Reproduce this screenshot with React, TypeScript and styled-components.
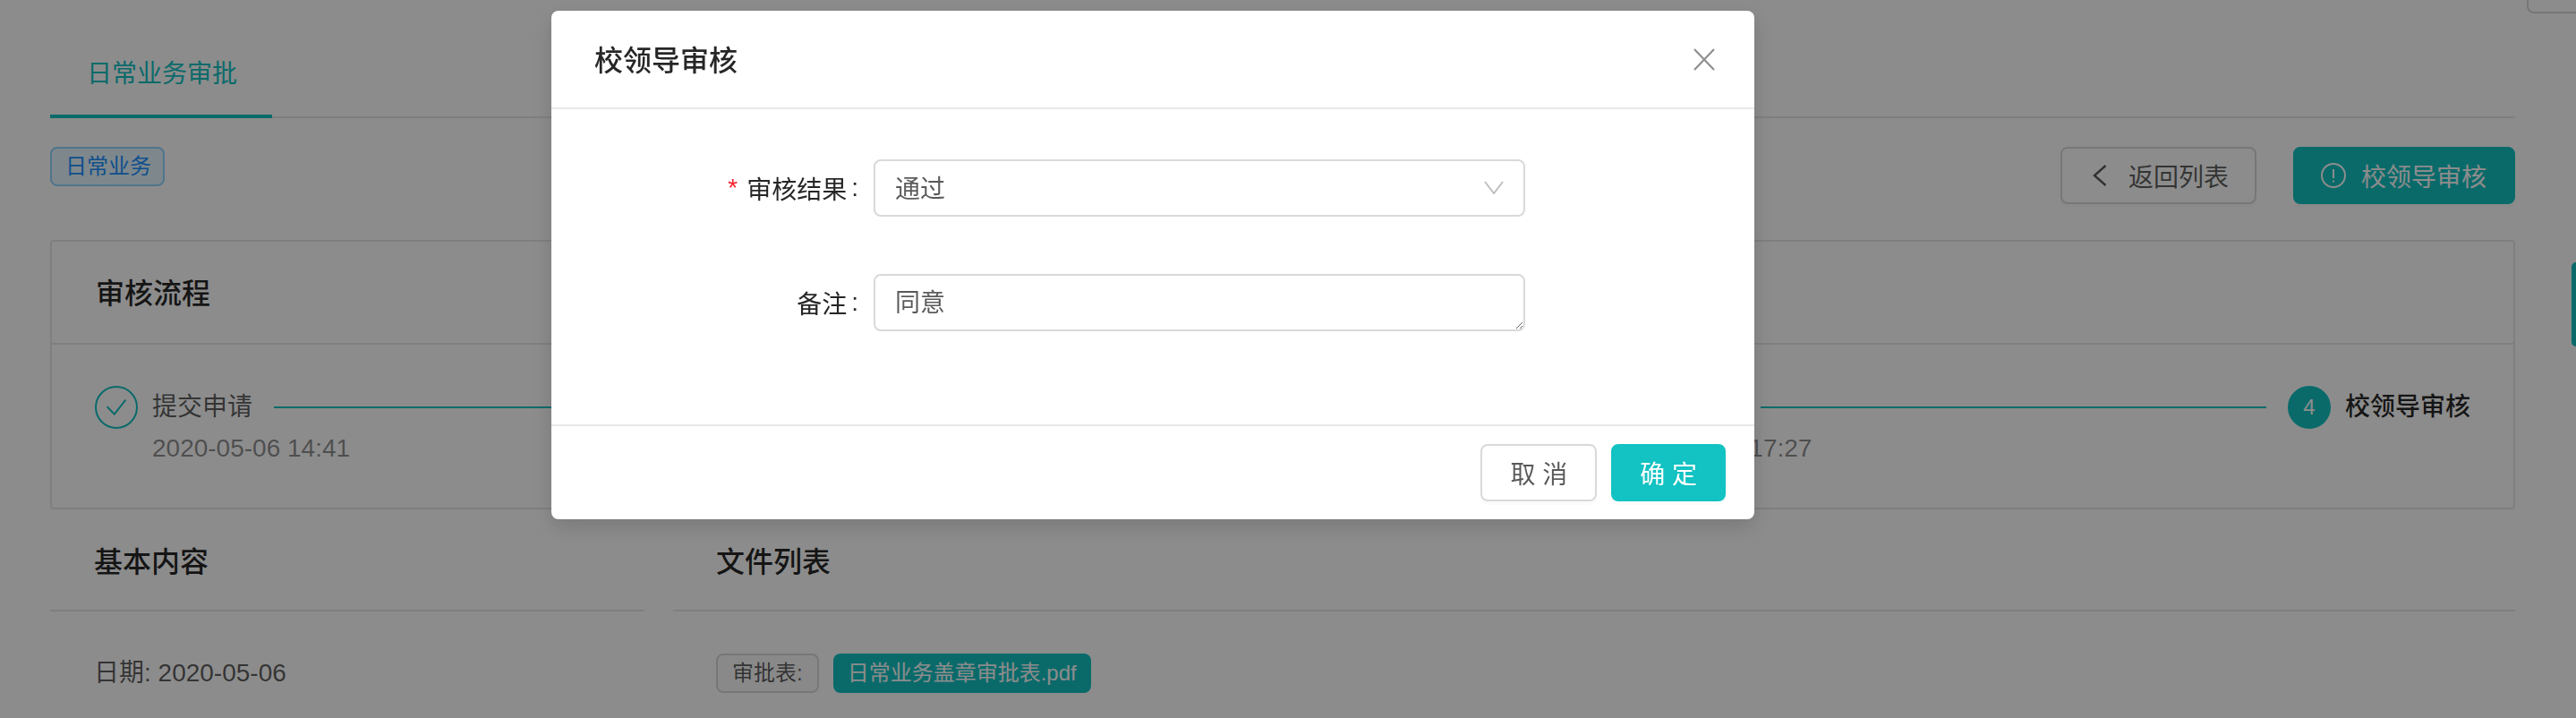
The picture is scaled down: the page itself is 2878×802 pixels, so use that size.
import React from "react";
import styled, { createGlobalStyle } from "styled-components";

const Global = createGlobalStyle`
  html, body { margin: 0; padding: 0; height: 802px; overflow: hidden; background: #fff; }
  body { font-family: "Liberation Sans", "Noto Sans CJK SC", sans-serif; font-size: 28px; color: rgba(0,0,0,.65); }
  * { box-sizing: border-box; }
`;

const TEAL = "#13c2c2";

const Page = styled.div`
  width: 2878px; height: 802px; padding: 0 68px 0 56px; overflow: hidden; position: relative;
`;
const Tabs = styled.div`
  height: 132px; display: flex; align-items: flex-end; border-bottom: 2px solid #e8e8e8;
`;
const ActiveTab = styled.div`
  width: 248px; height: 132px; margin-bottom: -2px; border-bottom: 4px solid ${TEAL};
  color: ${TEAL}; font-size: 28px; line-height: 40px; padding: 63px 0 0 41px; white-space: nowrap;
`;
const Toolbar = styled.div`
  margin-top: 32px; height: 64px; display: flex; justify-content: space-between; align-items: flex-start;
`;
const BlueTag = styled.span`
  height: 44px; padding: 0 13px 0 15px; display: inline-flex; align-items: center; border: 2px solid #91d5ff;
  border-radius: 8px; background: #e6f7ff; color: #1890ff; font-size: 24px; line-height: 40px;
`;
const Actions = styled.div`
  display: flex; gap: 41px;
`;
const PageButton = styled.div<{ $primary?: boolean }>`
  height: 64px; display: flex; align-items: center; border-radius: 8px; font-size: 28px; white-space: nowrap;
  border: 2px solid ${(p) => (p.$primary ? TEAL : "#d9d9d9")};
  background: ${(p) => (p.$primary ? TEAL : "#fff")};
  color: ${(p) => (p.$primary ? "#fff" : "rgba(0,0,0,.65)")};
  padding: ${(p) => (p.$primary ? "0 30px 0 29px" : "0 29px 0 34px")};
  gap: ${(p) => (p.$primary ? "17px" : "24px")};
  box-shadow: 0 4px 0 rgba(0,0,0,.015);
`;
const Card = styled.section`
  margin-top: 40px; height: 301px; border: 2px solid #e8e8e8; border-radius: 4px;
`;
const CardTitle = styled.div`
  height: 109px; padding: 0 0 4px 49px; border-bottom: 2px solid #e8e8e8; display: flex; align-items: center;
  font-size: 32px; font-weight: 500; color: rgba(0,0,0,.85); box-sizing: content-box;
`;
const Steps = styled.div`
  display: flex; padding: 46px 48px 0 48px;
`;
const Step = styled.div<{ $last?: boolean }>`
  display: flex; gap: 16px; flex: ${(p) => (p.$last ? "0 0 auto" : "1 1 0")}; min-width: 0;
  padding-right: ${(p) => (p.$last ? "0" : "24px")};
`;
const StepCircle = styled.div<{ $filled?: boolean }>`
  flex: 0 0 48px; width: 48px; height: 48px; border-radius: 50%; border: 2px solid ${TEAL};
  background: ${(p) => (p.$filled ? TEAL : "#fff")}; color: #fff; display: flex; align-items: center; justify-content: center;
  font-size: 24px;
`;
const StepBody = styled.div`
  flex: 1; min-width: 0;
`;
const StepHead = styled.div`
  display: flex; align-items: center; height: 48px; gap: 24px;
`;
const StepTitle = styled.div<{ $active?: boolean }>`
  font-size: 28px; line-height: 48px; white-space: nowrap; font-weight: ${(p) => (p.$active ? 500 : 400)};
  color: ${(p) => (p.$active ? "rgba(0,0,0,.85)" : "rgba(0,0,0,.65)")};
`;
const StepLine = styled.div`
  flex: 1; height: 2px; background: ${TEAL};
`;
const StepDate = styled.div`
  font-size: 28px; line-height: 44px; color: rgba(0,0,0,.45); white-space: nowrap;
`;
const Columns = styled.div`
  display: grid; grid-template-columns: 664px 1fr; column-gap: 32px;
`;
const SectionTitle = styled.div<{ $inset: number }>`
  height: 114px; padding-left: ${(p) => p.$inset}px; border-bottom: 2px solid #e8e8e8; display: flex; align-items: center;
  font-size: 32px; font-weight: 500; color: rgba(0,0,0,.85);
`;
const SectionBody = styled.div<{ $inset: number }>`
  padding: 46px 0 0 ${(p) => p.$inset}px; display: flex; align-items: center; gap: 16px; height: 92px;
  font-size: 28px; line-height: 44px;
`;
const GreyTag = styled.span`
  height: 44px; padding: 0 16px; display: inline-flex; align-items: center; border: 2px solid #d9d9d9; border-radius: 8px;
  background: #fafafa; font-size: 24px; color: rgba(0,0,0,.65);
`;
const TealTag = styled.span`
  height: 44px; padding: 0 16px; display: inline-flex; align-items: center; border-radius: 8px;
  background: ${TEAL}; font-size: 24px; color: #fff; white-space: nowrap;
`;
const TopCorner = styled.div`
  position: absolute; left: 2823px; top: -40px; width: 100px; height: 55px; border: 2px solid #d9d9d9; border-radius: 8px;
`;
const SideHandle = styled.div`
  position: absolute; right: 0; top: 293px; width: 5px; height: 94px; background: ${TEAL}; border-radius: 8px 0 0 8px;
`;
const Mask = styled.div`
  position: fixed; inset: 0; background: rgba(0,0,0,.45); padding: 12px 0 0 616px;
`;
const Dialog = styled.div`
  width: 1344px; height: 568px; background: #fff; border-radius: 8px; box-shadow: 0 8px 24px rgba(0,0,0,.15);
  display: flex; flex-direction: column;
`;
const DialogHeader = styled.div`
  height: 110px; flex: none; border-bottom: 2px solid #e8e8e8; padding: 0 44px 0 48px;
  display: flex; align-items: center; justify-content: space-between;
`;
const DialogTitle = styled.div`
  font-size: 32px; font-weight: 500; color: rgba(0,0,0,.85); padding-bottom: 3px;
`;
const DialogBody = styled.div`
  flex: 1; padding-top: 56px; display: flex; flex-direction: column; gap: 64px;
`;
const FormRow = styled.div`
  display: flex; height: 64px;
`;
const Label = styled.label`
  width: 360px; flex: none; display: flex; justify-content: flex-end; align-items: center; font-size: 28px;
  color: rgba(0,0,0,.85); padding: 0 16px 1px 0; white-space: nowrap;
`;
const Required = styled.span`
  color: #f5222d; font-size: 28px; margin-right: 10px; line-height: 1;
`;
const Colon = styled.span`
  margin-left: 5px; margin-right: 1px;
`;
const SelectBox = styled.div`
  width: 728px; height: 64px; border: 2px solid #d9d9d9; border-radius: 8px; padding: 0 22px 2px;
  display: flex; align-items: center; justify-content: space-between; font-size: 28px; color: rgba(0,0,0,.65);
`;
const TextArea = styled.textarea`
  width: 728px; height: 64px; border: 2px solid #d9d9d9; border-radius: 8px; padding: 9px 22px 7px; outline: none;
  font-family: inherit; font-size: 28px; line-height: 44px; color: rgba(0,0,0,.65); background: #fff; display: block;
`;
const DialogFooter = styled.div`
  height: 106px; flex: none; border-top: 2px solid #e8e8e8; padding: 20px 32px; display: flex; justify-content: flex-end; gap: 16px;
`;
const DialogButton = styled.div<{ $primary?: boolean }>`
  height: 64px; border-radius: 8px; display: flex; align-items: center; font-size: 28px; white-space: pre;
  padding: ${(p) => (p.$primary ? "0 30px" : "0 31px")};
  border: 2px solid ${(p) => (p.$primary ? TEAL : "#d9d9d9")};
  background: ${(p) => (p.$primary ? TEAL : "#fff")};
  color: ${(p) => (p.$primary ? "#fff" : "rgba(0,0,0,.65)")};
  box-shadow: 0 4px 0 rgba(0,0,0,.015);
`;

const Check = () => (
  <svg width="22" height="18" viewBox="0 0 22 18" fill="none" stroke={TEAL} strokeWidth="2">
    <path d="M0.6 8.2 L8.8 16.6 L21.4 0.6" />
  </svg>
);
const Close = () => (
  <svg width="24" height="25" viewBox="0 0 24 25" fill="none" stroke="#8f8f8f" strokeWidth="2.2">
    <path d="M1 1 L23 24 M23 1 L1 24" />
  </svg>
);
const Chevron = () => (
  <svg width="22" height="15" viewBox="0 0 22 15" fill="none" stroke="#bfbfbf" strokeWidth="2">
    <path d="M1 1 L11 14 L21 1" />
  </svg>
);
const Back = () => (
  <svg width="16" height="24" viewBox="0 0 16 24" fill="none" stroke="rgba(0,0,0,.65)" strokeWidth="2.4">
    <path d="M14.5 1 L2 12 L14.5 23" />
  </svg>
);
const Alert = () => (
  <svg width="28" height="28" viewBox="0 0 28 28" fill="none" stroke="#fff" strokeWidth="2">
    <circle cx="14" cy="14" r="13" />
    <path d="M14 7 V17" />
    <path d="M14 19.5 V21.5" />
  </svg>
);

export default function App() {
  return (
    <>
      <Global />
      <Page>
        <Tabs>
          <ActiveTab>日常业务审批</ActiveTab>
        </Tabs>
        <Toolbar>
          <BlueTag>日常业务</BlueTag>
          <Actions>
            <PageButton>
              <Back />
              返回列表
            </PageButton>
            <PageButton $primary>
              <Alert />
              校领导审核
            </PageButton>
          </Actions>
        </Toolbar>
        <Card>
          <CardTitle>审核流程</CardTitle>
          <Steps>
            <Step>
              <StepCircle><Check /></StepCircle>
              <StepBody>
                <StepHead><StepTitle>提交申请</StepTitle><StepLine /></StepHead>
                <StepDate>2020-05-06 14:41</StepDate>
              </StepBody>
            </Step>
            <Step>
              <StepCircle><Check /></StepCircle>
              <StepBody>
                <StepHead><StepTitle>部门审核</StepTitle><StepLine /></StepHead>
                <StepDate>2020-05-06 15:12</StepDate>
              </StepBody>
            </Step>
            <Step>
              <StepCircle><Check /></StepCircle>
              <StepBody>
                <StepHead><StepTitle>分管领导审</StepTitle><StepLine /></StepHead>
                <StepDate>2020-05-06 17:27</StepDate>
              </StepBody>
            </Step>
            <Step $last>
              <StepCircle $filled>4</StepCircle>
              <StepBody>
                <StepHead><StepTitle $active>校领导审核</StepTitle></StepHead>
              </StepBody>
            </Step>
          </Steps>
        </Card>
        <Columns>
          <div>
            <SectionTitle $inset={49}>基本内容</SectionTitle>
            <SectionBody $inset={49}>日期: 2020-05-06</SectionBody>
          </div>
          <div>
            <SectionTitle $inset={48}>文件列表</SectionTitle>
            <SectionBody $inset={48}>
              <GreyTag>审批表:</GreyTag>
              <TealTag>日常业务盖章审批表.pdf</TealTag>
            </SectionBody>
          </div>
        </Columns>
        <TopCorner />
        <SideHandle />
      </Page>
      <Mask>
        <Dialog>
          <DialogHeader>
            <DialogTitle>校领导审核</DialogTitle>
            <Close />
          </DialogHeader>
          <DialogBody>
            <FormRow>
              <Label><Required>*</Required>审核结果<Colon>:</Colon></Label>
              <SelectBox>通过<Chevron /></SelectBox>
            </FormRow>
            <FormRow>
              <Label>备注<Colon>:</Colon></Label>
              <TextArea defaultValue="同意" />
            </FormRow>
          </DialogBody>
          <DialogFooter>
            <DialogButton>取 消</DialogButton>
            <DialogButton $primary>确 定</DialogButton>
          </DialogFooter>
        </Dialog>
      </Mask>
    </>
  );
}
